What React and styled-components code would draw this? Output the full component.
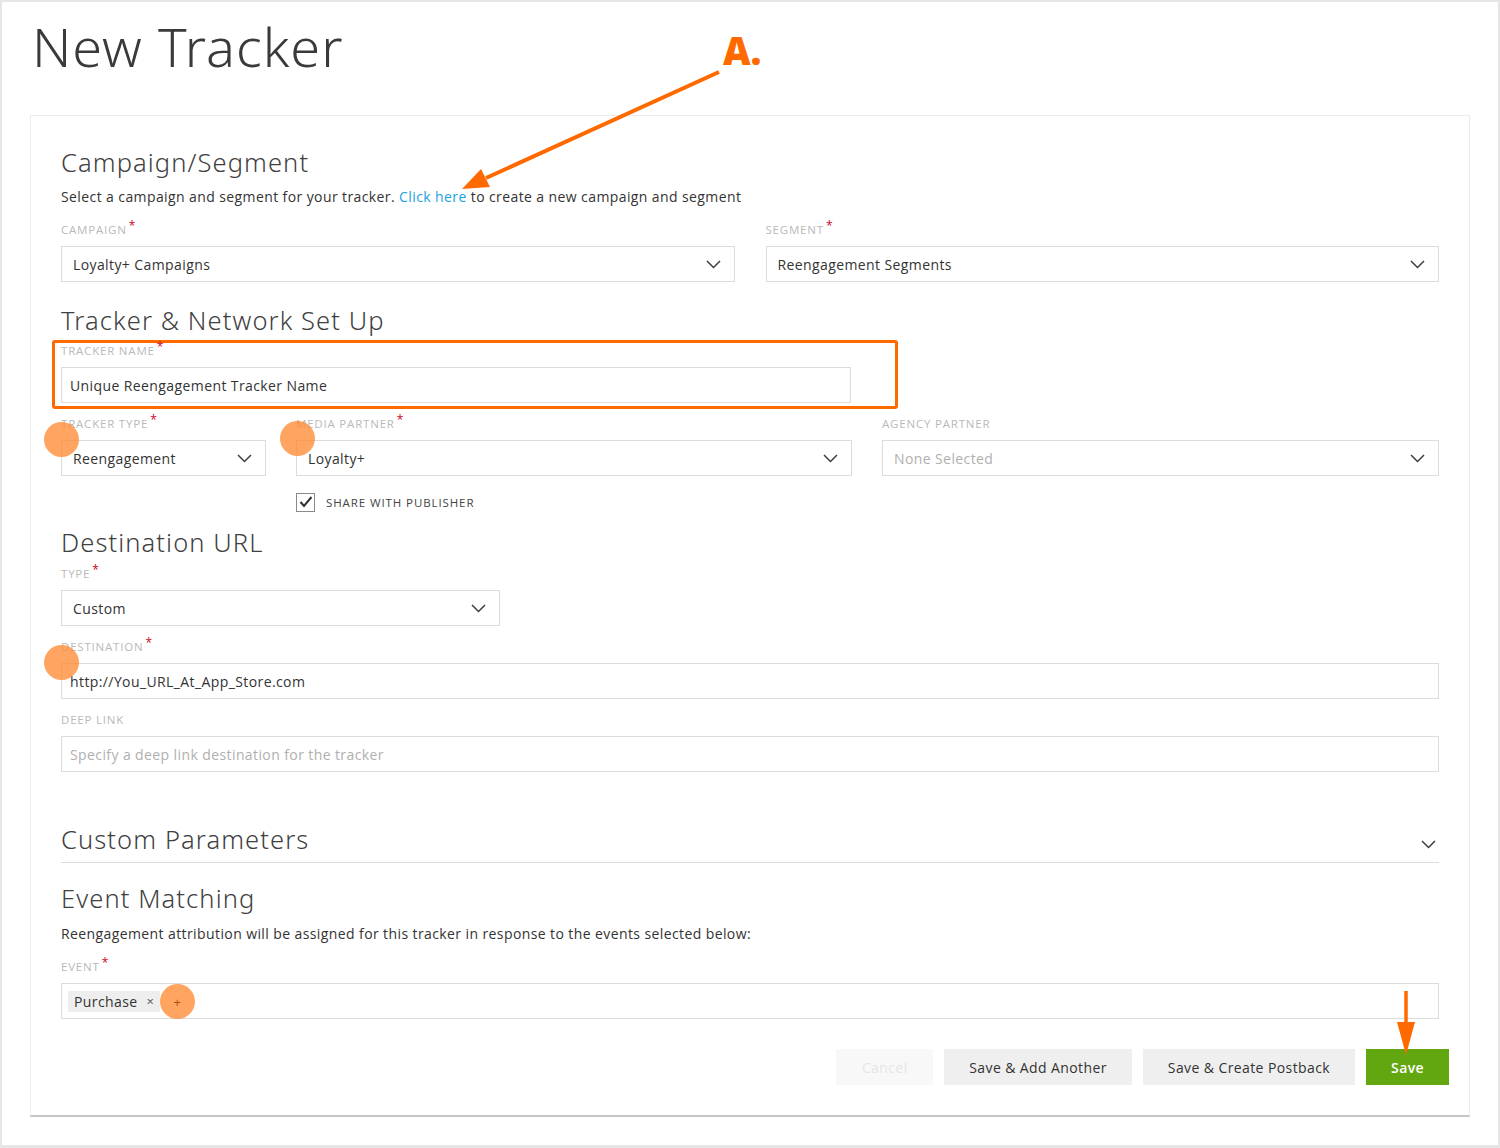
import React from "react";
import styled, { createGlobalStyle } from "styled-components";

const GlobalStyle = createGlobalStyle`
  * { box-sizing: border-box; }
  html, body { margin: 0; padding: 0; background: #fff; }
  body {
    font-family: "Open Sans", "Liberation Sans", sans-serif;
    color: #333;
  }
`;

const Frame = styled.div`
  position: relative;
  width: 1500px;
  height: 1148px;
  border: 2px solid #e6e6e6;
  border-bottom-width: 3px;
  padding: 17px 28px 0 28px;
  background: #fff;
  overflow: hidden;
`;

const PageTitle = styled.h1`
  margin: 0 0 0 2px;
  font-family: "Noto Sans", Lato, sans-serif;
  font-weight: 300;
  font-size: 54px;
  line-height: 54px;
  color: #3a3a3a;
  letter-spacing: 1px;
`;

const Card = styled.div`
  margin-top: 42px;
  border: 1px solid #ececec;
  border-bottom: 2px solid #c6c6c6;
  padding: 31px 30px 30px;
`;

const SectionTitle = styled.h2`
  margin: ${({ $top }) => $top || 0}px 0 0;
  font-family: "Noto Sans", Lato, sans-serif;
  font-weight: 300;
  font-size: 25.5px;
  line-height: 30px;
  color: #404040;
  letter-spacing: 1.1px;
`;

const Description = styled.p`
  margin: ${({ $top }) => $top || 0}px 0 0;
  font-size: 14px;
  line-height: 20px;
  color: #333;
  letter-spacing: 0.4px;
`;

const Link = styled.a`
  color: #1aa3e0;
  text-decoration: none;
`;

const Field = styled.div`
  margin-top: ${({ $top }) => $top || 0}px;
  display: flex;
  flex-direction: column;
`;

const Label = styled.label`
  display: block;
  font-size: 11.5px;
  line-height: 16px;
  color: #b9b9b9;
  text-transform: uppercase;
  letter-spacing: 0.8px;
  margin-bottom: 8px;
`;

const Required = styled.span`
  color: #d0021b;
  font-size: 12px;
  position: relative;
  top: -4px;
  margin-left: 2px;
`;

const Control = styled.div`
  position: relative;
  height: 36px;
  border: 1px solid #dcdcdc;
  background: #fff;
  display: flex;
  align-items: center;
  justify-content: space-between;
  padding: 0 13px 0 ${({ $text }) => ($text ? 8 : 11)}px;
  font-size: 14px;
  letter-spacing: 0.4px;
  color: ${({ $muted }) => ($muted ? "#b0b0b0" : "#333")};
`;

const TwoCol = styled.div`
  margin-top: 15px;
  display: grid;
  grid-template-columns: 1fr 1fr;
  column-gap: 31px;
`;

const ThreeCol = styled.div`
  margin-top: 7px;
  display: grid;
  grid-template-columns: 205px 556px 1fr;
  column-gap: 30px;
  align-items: start;
`;

const Highlight = styled.div`
  margin: 5px 0 0 -9px;
  width: 846px;
  border: 3px solid #ff6a00;
  border-radius: 3px;
  padding: 0 44px 3px 6px;
`;

const Narrow = styled.div`
  width: 439px;
`;

const CheckRow = styled.div`
  margin-top: 16px;
  display: flex;
  align-items: center;
  height: 20px;
`;

const CheckBox = styled.span`
  width: 19px;
  height: 19px;
  border: 1px solid #8a8a8a;
  display: flex;
  align-items: center;
  justify-content: center;
`;

const CheckText = styled.span`
  margin-left: 11px;
  font-size: 11.5px;
  letter-spacing: 0.9px;
  color: #444;
  text-transform: uppercase;
`;

const CollapseRow = styled.div`
  margin-top: 52px;
  display: flex;
  justify-content: space-between;
  border-bottom: 1px solid #dcdcdc;
  padding-bottom: 8px;
`;

const CollapseIcon = styled.span`
  align-self: flex-end;
  margin: 0 3px 5px 0;
  display: flex;
`;

const Marker = styled.span`
  position: absolute;
  left: ${({ $x }) => $x}px;
  top: ${({ $y }) => $y}px;
  width: 35px;
  height: 35px;
  border-radius: 50%;
  background: rgba(255, 138, 52, 0.78);
  display: flex;
  align-items: center;
  justify-content: center;
  color: #b24d00;
  font-size: 13px;
  z-index: 2;
`;

const Tag = styled.span`
  display: inline-flex;
  align-items: center;
  height: 21px;
  padding: 0 6px;
  background: #eeeeee;
  font-size: 14px;
  letter-spacing: 0.4px;
  color: #333;
`;

const TagClose = styled.span`
  margin-left: 9px;
  color: #555;
  font-size: 13px;
`;

const TagInput = styled(Control)`
  justify-content: flex-start;
  padding-left: 6px;
`;

const ButtonRow = styled.div`
  margin: 30px -10px 0 0;
  display: flex;
  justify-content: flex-end;
  gap: 11px;
`;

const Button = styled.button`
  height: 36px;
  padding: 0 25px;
  border: none;
  font-family: inherit;
  font-size: 14px;
  letter-spacing: 0.4px;
  cursor: pointer;
  background: ${({ $variant }) =>
    $variant === "primary" ? "#62a70f" : $variant === "ghost" ? "#f8f8f8" : "#efefef"};
  color: ${({ $variant }) =>
    $variant === "primary" ? "#fff" : $variant === "ghost" ? "#e6e6e6" : "#333"};
  font-weight: ${({ $variant }) => ($variant === "primary" ? 600 : 400)};
  min-width: ${({ $min }) => $min || 0}px;
`;

const Overlay = styled.svg`
  position: absolute;
  left: -2px;
  top: -2px;
  pointer-events: none;
  z-index: 3;
`;

const Callout = styled.span`
  position: absolute;
  left: 721px;
  top: 29px;
  font-size: 38px;
  line-height: 38px;
  font-weight: 800;
  color: #ff6a00;
  z-index: 3;
`;

const Chevron = () => (
  <svg width="15" height="9" viewBox="0 0 15 9">
    <polyline points="1,1 7.5,7.5 14,1" fill="none" stroke="#3d3d3d" strokeWidth="1.5" />
  </svg>
);

const Check = () => (
  <svg width="14" height="12" viewBox="0 0 14 12">
    <polyline points="1.5,6 5,10 12.5,1" fill="none" stroke="#333" strokeWidth="2" />
  </svg>
);

const Req = () => <Required>*</Required>;

const Select = ({ value, muted }) => (
  <Control $muted={muted}>
    <span>{value}</span>
    <Chevron />
  </Control>
);

export default function App() {
  return (
    <>
      <GlobalStyle />
      <Frame>
        <PageTitle>New Tracker</PageTitle>
        <Callout>A.</Callout>
        <Card>
          <SectionTitle>Campaign/Segment</SectionTitle>
          <Description $top={10}>
            Select a campaign and segment for your tracker. <Link href="#">Click here</Link> to create a
            new campaign and segment
          </Description>
          <TwoCol>
            <Field>
              <Label>Campaign<Req /></Label>
              <Select value="Loyalty+ Campaigns" />
            </Field>
            <Field>
              <Label>Segment<Req /></Label>
              <Select value="Reengagement Segments" />
            </Field>
          </TwoCol>

          <SectionTitle $top={23}>Tracker &amp; Network Set Up</SectionTitle>
          <Highlight>
            <Field>
              <Label>Tracker Name<Req /></Label>
              <Control $text>
                <span>Unique Reengagement Tracker Name</span>
              </Control>
            </Field>
          </Highlight>
          <ThreeCol>
            <Field>
              <Label>Tracker Type<Req /></Label>
              <Control>
                <Marker $x={-18} $y={-19} />
                <span>Reengagement</span>
                <Chevron />
              </Control>
            </Field>
            <Field>
              <Label>Media Partner<Req /></Label>
              <Control>
                <Marker $x={-17} $y={-20} />
                <span>Loyalty+</span>
                <Chevron />
              </Control>
              <CheckRow>
                <CheckBox>
                  <Check />
                </CheckBox>
                <CheckText>Share with publisher</CheckText>
              </CheckRow>
            </Field>
            <Field>
              <Label>Agency Partner</Label>
              <Select value="None Selected" muted />
            </Field>
          </ThreeCol>

          <SectionTitle $top={15}>Destination URL</SectionTitle>
          <Narrow>
            <Field $top={9}>
              <Label>Type<Req /></Label>
              <Select value="Custom" />
            </Field>
          </Narrow>
          <Field $top={13}>
            <Label>Destination<Req /></Label>
            <Control $text>
              <Marker $x={-18} $y={-19} />
              <span>http://You_URL_At_App_Store.com</span>
            </Control>
          </Field>
          <Field $top={13}>
            <Label>Deep Link</Label>
            <Control $text $muted>
              <span>Specify a deep link destination for the tracker</span>
            </Control>
          </Field>

          <CollapseRow>
            <SectionTitle>Custom Parameters</SectionTitle>
            <CollapseIcon>
              <Chevron />
            </CollapseIcon>
          </CollapseRow>

          <SectionTitle $top={20}>Event Matching</SectionTitle>
          <Description $top={11}>
            Reengagement attribution will be assigned for this tracker in response to the events selected below:
          </Description>
          <Field $top={15}>
            <Label>Event<Req /></Label>
            <TagInput>
              <Tag>
                Purchase<TagClose>×</TagClose>
              </Tag>
              <Marker $x={98} $y={0}>+</Marker>
            </TagInput>
          </Field>

          <ButtonRow>
            <Button $variant="ghost" $min={97}>Cancel</Button>
            <Button>Save &amp; Add Another</Button>
            <Button>Save &amp; Create Postback</Button>
            <Button $variant="primary">Save</Button>
          </ButtonRow>
        </Card>

        <Overlay width="1500" height="1148" viewBox="0 0 1500 1148">
          <line x1="719" y1="72" x2="486" y2="178" stroke="#ff6a00" strokeWidth="4" />
          <polygon points="462,189 490,187 481,169" fill="#ff6a00" />
          <line x1="1406" y1="991" x2="1406" y2="1026" stroke="#ff6a00" strokeWidth="3.5" />
          <polygon points="1397,1022 1415,1022 1406,1055" fill="#ff6a00" />
        </Overlay>
      </Frame>
    </>
  );
}
